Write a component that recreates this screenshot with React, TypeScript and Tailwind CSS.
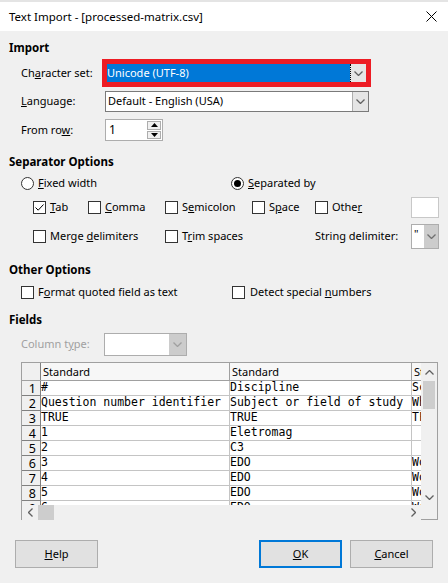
import React from "react";

const ui = "font-['Noto_Sans','Segoe_UI',sans-serif]";
const mono = "font-['DejaVu_Sans_Mono','Liberation_Mono',monospace]";

function Chevron({ color = "#606060", dir = "down" }: { color?: string; dir?: string }) {
  const d =
    dir === "down"
      ? "M0.5 0.5 L4.5 4.5 L8.5 0.5"
      : dir === "up"
      ? "M0.5 4.5 L4.5 0.5 L8.5 4.5"
      : dir === "left"
      ? "M4.5 0.5 L0.5 4.5 L4.5 8.5"
      : "M0.5 0.5 L4.5 4.5 L0.5 8.5";
  const horiz = dir === "left" || dir === "right";
  return (
    <svg width={horiz ? 5 : 9} height={horiz ? 9 : 5} viewBox={horiz ? "0 0 5 9" : "0 0 9 5"}>
      <path d={d} fill="none" stroke={color} strokeWidth="1.3" />
    </svg>
  );
}

function Check({ on = false }: { on?: boolean }) {
  return (
    <span className="w-[13px] h-[13px] border border-[#333333] bg-white flex items-center justify-center shrink-0">
      {on && (
        <svg width="9" height="7" viewBox="0 0 9 7">
          <path d="M0.5 3.5 L3.2 6.2 L8.5 0.5" fill="none" stroke="#000" strokeWidth="1" />
        </svg>
      )}
    </span>
  );
}

function Radio({ on = false }: { on?: boolean }) {
  return (
    <span className="w-[13px] h-[13px] rounded-full border border-[#333333] bg-white flex items-center justify-center shrink-0">
      {on && <span className="w-[7px] h-[7px] rounded-full bg-black" />}
    </span>
  );
}

function Heading({ children, mt }: { children: React.ReactNode; mt: string }) {
  return <div className={`${mt} h-[16px] leading-[16px] font-bold text-[11.5px]`}>{children}</div>;
}

const rows = [
  ["#", "Discipline", "Sc"],
  ["Question number identifier", "Subject or field of study", "Wh"],
  ["TRUE", "TRUE", "TF"],
  ["1", "Eletromag", ""],
  ["2", "C3", ""],
  ["3", "EDO", "Wo"],
  ["4", "EDO", "Wo"],
  ["5", "EDO", "Wo"],
  ["6", "EDO", "Wo"],
];

function Grid() {
  return (
    <div className="mt-[6px] ml-[12px] w-[417px] h-[158px] flex flex-col border-l border-t border-r border-[#a0a0a0]">
      <div className="flex h-[142px]">
        <div className="w-[400px] overflow-hidden bg-white">
          <div className="flex h-[18px] bg-[#f7f7f7] border-b border-[#a0a0a0]">
            <div className="w-[19px] shrink-0 border-r border-[#808080] bg-[#f0f0f0]" />
            <div className="w-[189px] shrink-0 border-r border-[#a0a0a0] pl-[2px] leading-[17px]">Standard</div>
            <div className="w-[182px] shrink-0 border-r border-[#a0a0a0] pl-[2px] leading-[17px]">Standard</div>
            <div className="w-[20px] shrink-0 pl-[2px] leading-[17px] whitespace-nowrap overflow-hidden">St</div>
          </div>
          {rows.map((r, i) => (
            <div key={i} className="flex h-[15px]">
              <div className="w-[19px] h-[15px] shrink-0 bg-[#f0f0f0] border-r border-b border-[#808080] text-[12.5px] leading-[15px] text-right pr-[4px] overflow-hidden">
                {i + 1}
              </div>
              <div className={`w-[189px] shrink-0 border-r border-b border-[#c4c4c4] ${mono} text-[11.5px] leading-[12px] whitespace-nowrap overflow-hidden`}>
                {r[0]}
              </div>
              <div className={`w-[182px] shrink-0 border-r border-b border-[#c4c4c4] ${mono} text-[11.5px] leading-[12px] whitespace-nowrap overflow-hidden`}>
                {r[1]}
              </div>
              <div className={`w-[20px] shrink-0 border-b border-[#c4c4c4] ${mono} text-[11.5px] leading-[12px] whitespace-nowrap overflow-hidden`}>
                {r[2]}
              </div>
            </div>
          ))}
        </div>
        <div className="w-[16px] bg-[#f0f0f0] flex flex-col items-center">
          <div className="h-[18px] flex items-center justify-center">
            <Chevron dir="up" />
          </div>
          <div className="w-[12px] h-[28px] bg-[#cdcdcd]" />
          <div className="flex-1" />
          <div className="h-[16px] flex items-center justify-center">
            <Chevron dir="down" />
          </div>
        </div>
      </div>
      <div className="flex h-[16px]">
        <div className="w-[400px] bg-[#f0f0f0] flex items-center">
          <div className="w-[16px] flex justify-center">
            <Chevron dir="left" />
          </div>
          <div className="w-[16px] h-[15px] bg-[#cdcdcd]" />
          <div className="flex-1" />
          <div className="w-[16px] flex justify-center">
            <Chevron dir="right" />
          </div>
        </div>
        <div className="w-[16px] border-b border-[#a0a0a0]" />
      </div>
    </div>
  );
}

function Button({ children, focus = false }: { children: React.ReactNode; focus?: boolean }) {
  return (
    <div
      className={`w-[83px] h-[28px] bg-[#e1e1e1] flex items-center justify-center ${
        focus ? "border-2 border-[#0078d7]" : "border border-[#adadad]"
      }`}
    >
      {children}
    </div>
  );
}

export default function App() {
  return (
    <div className={`w-[448px] h-[583px] bg-[#f0f0f0] flex flex-col ${ui} text-[11px] text-black overflow-hidden`}>
      <div className="h-[2px] bg-[#e4e4e4]" />
      <div className="h-[29px] bg-white flex items-center justify-between pl-[9px] pr-[11px]">
        <span className="text-[11.5px]">Text Import - [processed-matrix.csv]</span>
        <svg width="11" height="11" viewBox="0 0 11 11">
          <path d="M0.5 0.5 L10.5 10.5 M10.5 0.5 L0.5 10.5" stroke="#000" strokeWidth="1" />
        </svg>
      </div>

      <div className="flex flex-col pl-[9px] pt-[9px]">
        <Heading mt="mt-0">Import</Heading>

        <div className="mt-[3px] h-[28px] flex items-center pl-[12px]">
          <span className="w-[81px]">
            Ch<span className="underline">a</span>racter set:
          </span>
          <div className="w-[269px] h-[28px] border-[5px] border-[#ed1c24] flex">
            <div className="flex-1 bg-[#0078d7] text-white flex items-center">Unicode (UTF-8)</div>
            <div className="w-[16px] bg-[#e5e5e5] border-l border-dotted border-black flex items-center justify-center">
              <Chevron />
            </div>
          </div>
        </div>

        <div className="mt-[4px] h-[21px] flex items-center pl-[12px]">
          <span className="w-[84px]">
            <span className="underline">L</span>anguage:
          </span>
          <div className="w-[264px] h-[21px] bg-white border border-[#7a7a7a] flex">
            <div className="flex-1 pl-[2px] flex items-center">Default - English (USA)</div>
            <div className="w-[16px] bg-[#e5e5e5] border-l border-[#adadad] flex items-center justify-center">
              <Chevron />
            </div>
          </div>
        </div>

        <div className="mt-[7px] h-[22px] flex items-center pl-[12px]">
          <span className="w-[84px]">
            From ro<span className="underline">w</span>:
          </span>
          <div className="w-[58px] h-[22px] bg-white border border-[#adadad] flex">
            <div className="flex-1 pl-[3px] flex items-center text-[12px]">1</div>
            <div className="w-[16px] flex flex-col p-[1px] gap-[1px]">
              <div className="flex-1 bg-[#f0f0f0] border border-[#adadad] flex items-center justify-center">
                <svg width="7" height="4" viewBox="0 0 7 4">
                  <path d="M0 4 L3.5 0 L7 4 Z" fill="#000" />
                </svg>
              </div>
              <div className="flex-1 bg-[#f0f0f0] border border-[#adadad] flex items-center justify-center">
                <svg width="7" height="4" viewBox="0 0 7 4">
                  <path d="M0 0 L3.5 4 L7 0 Z" fill="#000" />
                </svg>
              </div>
            </div>
          </div>
        </div>

        <Heading mt="mt-[13px]">Separator Options</Heading>

        <div className="mt-[3px] h-[20px] flex items-center pl-[12px]">
          <div className="w-[210px] flex items-center gap-[4px]">
            <Radio />
            <span>
              <span className="underline">F</span>ixed width
            </span>
          </div>
          <div className="flex items-center gap-[4px]">
            <Radio on />
            <span>
              <span className="underline">S</span>eparated by
            </span>
          </div>
        </div>

        <div className="mt-[4px] h-[21px] flex items-center pl-[24px]">
          <div className="w-[55px] flex items-center gap-[4px]">
            <Check on />
            <span>
              <span className="underline">T</span>ab
            </span>
          </div>
          <div className="w-[77px] flex items-center gap-[4px]">
            <Check />
            <span>
              <span className="underline">C</span>omma
            </span>
          </div>
          <div className="w-[87px] flex items-center gap-[4px]">
            <Check />
            <span>
              S<span className="underline">e</span>micolon
            </span>
          </div>
          <div className="w-[63px] flex items-center gap-[4px]">
            <Check />
            <span>
              S<span className="underline">p</span>ace
            </span>
          </div>
          <div className="w-[96px] flex items-center gap-[4px]">
            <Check />
            <span>
              Othe<span className="underline">r</span>
            </span>
          </div>
          <div className="w-[28px] h-[21px] bg-white border border-[#c8c8c8]" />
        </div>

        <div className="mt-[6px] h-[25px] flex items-center pl-[24px]">
          <div className="w-[132px] flex items-center gap-[4px]">
            <Check />
            <span>
              Merge <span className="underline">d</span>elimiters
            </span>
          </div>
          <div className="w-[150px] flex items-center gap-[4px]">
            <Check />
            <span>
              T<span className="underline">r</span>im spaces
            </span>
          </div>
          <div className="w-[96px]">
            Strin<span className="underline">g</span> delimiter:
          </div>
          <div className="w-[28px] h-[25px] bg-white border border-[#adadad] flex">
            <div className="flex-1 pl-[2px] leading-[18px]">"</div>
            <div className="w-[14px] bg-[#cccccc] flex items-center justify-center">
              <Chevron color="#707070" />
            </div>
          </div>
        </div>

        <Heading mt="mt-[13px]">Other Options</Heading>

        <div className="mt-[4px] h-[20px] flex items-center pl-[12px]">
          <div className="w-[211px] flex items-center gap-[4px]">
            <Check />
            <span>
              F<span className="underline">o</span>rmat quoted field as text
            </span>
          </div>
          <div className="flex items-center gap-[5px]">
            <Check />
            <span>
              Detect special <span className="underline">n</span>umbers
            </span>
          </div>
        </div>

        <Heading mt="mt-[10px]">Fields</Heading>

        <div className="mt-[5px] h-[23px] flex items-center pl-[12px]">
          <span className="w-[83px] text-[#a0a0a0]">
            Column t<span className="underline">y</span>pe:
          </span>
          <div className="w-[83px] h-[23px] bg-white border border-[#adadad] flex">
            <div className="flex-1" />
            <div className="w-[17px] bg-[#cccccc] flex items-center justify-center">
              <Chevron color="#a0a0a0" />
            </div>
          </div>
        </div>

        <Grid />

        <div className="mt-[20px] h-[28px] flex items-center pl-[6px]">
          <Button>
            <span>
              <span className="underline">H</span>elp
            </span>
          </Button>
          <div className="w-[161px]" />
          <Button focus>
            <span>
              <span className="underline">O</span>K
            </span>
          </Button>
          <div className="w-[8px]" />
          <Button>
            <span>
              <span className="underline">C</span>ancel
            </span>
          </Button>
        </div>
      </div>
    </div>
  );
}
